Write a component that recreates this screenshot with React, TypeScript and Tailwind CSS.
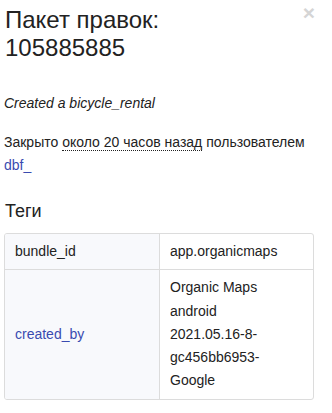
const tags = [
  { key: "bundle_id", value: ["app.organicmaps"], link: false },
  {
    key: "created_by",
    value: ["Organic Maps", "android", "2021.05.16-8-", "gc456bb6953-", "Google"],
    link: true,
  },
]

export default function App() {
  return (
    <div className="w-[332px] h-[413px] bg-white text-[#222] font-['Liberation_Sans',Arial,sans-serif] overflow-hidden">
      <div className="relative w-[318px] px-[4px] pt-[6px]">
        <button className="absolute right-[3px] top-[2px] text-[21px] leading-none font-bold text-[#d5d5d5]">
          ×
        </button>
        <h2 className="text-[24px] leading-[28px] pl-[1px] pr-[30px]">
          Пакет правок:
          <br />
          105885885
        </h2>

        <p className="mt-[30px] text-[14px] leading-[23px] italic">Created a bicycle_rental</p>

        <p className="mt-[16px] text-[14px] leading-[23px]">
          Закрыто{" "}
          <abbr className="no-underline border-b border-dotted border-[#222]">около 20 часов назад</abbr>{" "}
          пользователем{" "}
          <a className="text-[#3a4bb0]">dbf_</a>
        </p>

        <h3 className="mt-[22px] text-[18px] leading-[24px] pl-[1px]">Теги</h3>

        <div className="mt-[10px] border border-[#dcdcdc] rounded-[3px] overflow-hidden text-[14px] leading-[23.3px]">
          {tags.map((tag, i) => (
            <div
              key={tag.key}
              className={`grid grid-cols-[155px_1fr] ${i > 0 ? "border-t border-[#dcdcdc]" : ""}`}
            >
              <div className="flex items-center bg-[#f8f9fc] border-r border-[#dcdcdc] px-[10px] py-[6px]">
                <span className={tag.link ? "text-[#3a4bb0]" : ""}>{tag.key}</span>
              </div>
              <div className="px-[10px] py-[6px]">
                {tag.value.map((line) => (
                  <div key={line}>{line}</div>
                ))}
              </div>
            </div>
          ))}
        </div>
      </div>
    </div>
  )
}
